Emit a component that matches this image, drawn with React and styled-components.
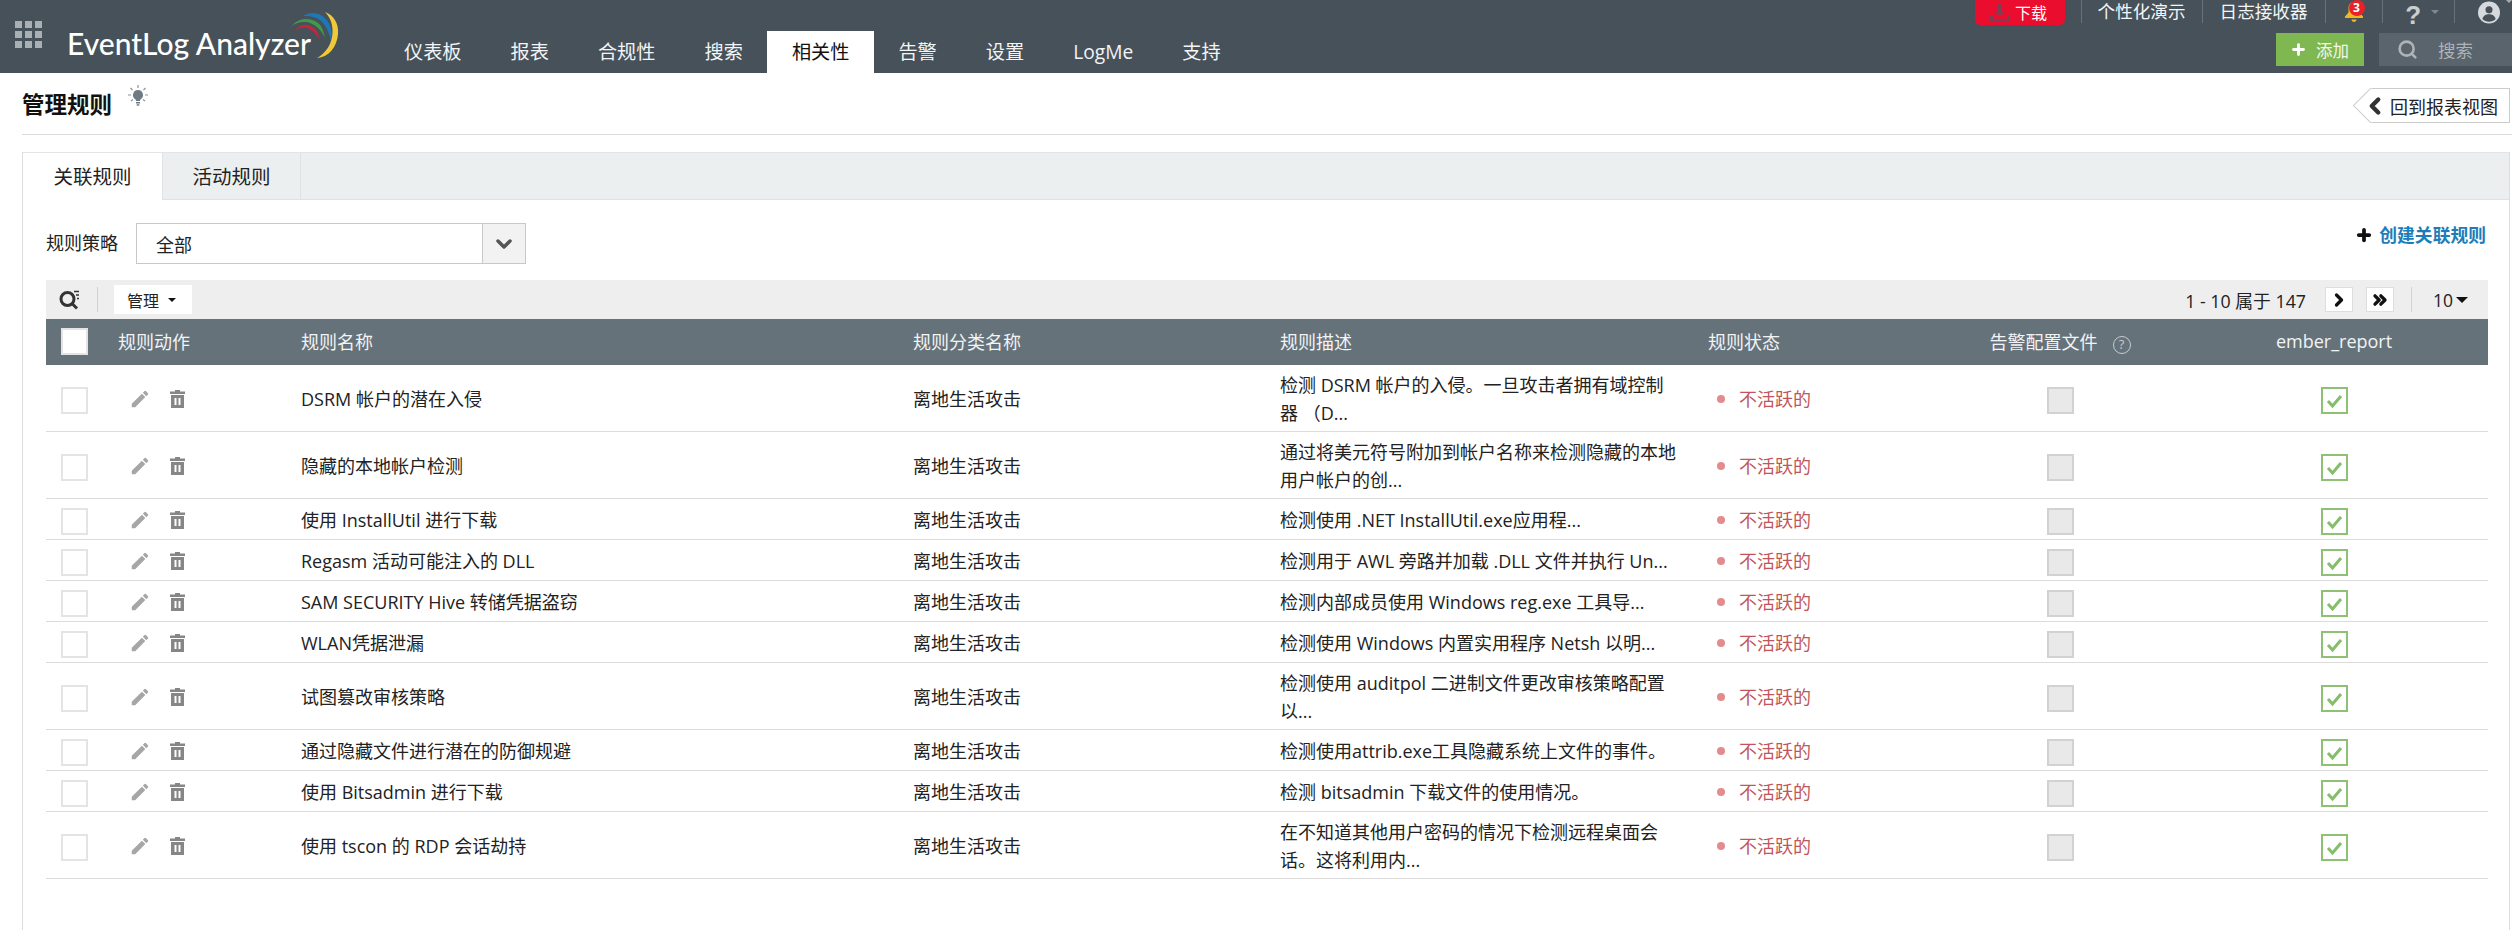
import React from "react";
import styled, { createGlobalStyle } from "styled-components";
import { MdEdit } from "react-icons/md";
import { ChevronLeft, ChevronRight, ChevronsRight, ChevronDown, Search, Plus } from "lucide-react";

const GlobalStyle = createGlobalStyle`
  html, body {
    margin: 0;
    padding: 0;
    background: #fff;
    color: #222;
    font-family: "Open Sans", "Noto Sans CJK SC", sans-serif;
    font-size: 18px;
  }
  * { box-sizing: border-box; }
`;

const Page = styled.div`
  width: 2512px;
  height: 930px;
  overflow: hidden;
  display: flex;
  flex-direction: column;
`;

/* top header */
const Header = styled.header`
  height: 73px;
  flex: none;
  background: #465159;
  display: flex;
  color: #fff;
`;

const Launcher = styled.svg`
  width: 27px;
  height: 27px;
  margin: 21px 0 0 15px;
  flex: none;
`;

const Brand = styled.div`
  position: relative;
  width: 270px;
  margin-left: 25px;
  flex: none;
`;

const BrandName = styled.span`
  display: block;
  margin-top: 24px;
  font-family: Lato, sans-serif;
  font-size: 30px;
  line-height: 38px;
  font-weight: 500;
  white-space: nowrap;
`;

const BrandArcs = styled.svg`
  position: absolute;
  left: 216px;
  top: 8px;
  width: 64px;
  height: 54px;
`;

const Nav = styled.nav`
  display: flex;
  align-items: flex-end;
  margin-left: 42.5px;
`;

const NavItem = styled.a`
  height: 42px;
  padding: 0 24.5px;
  font-size: 19.2px;
  line-height: 42px;
  white-space: nowrap;
  color: ${(p) => (p.$active ? "#111" : "#f2f4f5")};
  background: ${(p) => (p.$active ? "#fff" : "transparent")};
`;

const HeaderRight = styled.div`
  margin-left: auto;
  width: 537px;
  display: flex;
  flex-direction: column;
`;

const UtilityRow = styled.div`
  height: 33px;
  display: flex;
  align-items: flex-start;
`;

const DownloadButton = styled.a`
  width: 90px;
  height: 25px;
  padding-left: 15px;
  display: flex;
  align-items: center;
  gap: 5px;
  background: #ea0d2e;
  border-radius: 0 0 5px 5px;
  font-size: 16px;
  line-height: 24px;
`;

const UtilityLink = styled.a`
  height: 23px;
  padding: 0 ${(p) => p.$pad || 16}px;
  margin-left: ${(p) => p.$offset || 0}px;
  display: flex;
  align-items: center;
  border-left: ${(p) => (p.$first ? "1px solid #66717a" : "0")};
  border-right: 1px solid #66717a;
  font-size: 17.6px;
  line-height: 23px;
  color: #f4f5f6;
  white-space: nowrap;
`;

const IconSlot = styled.div`
  position: relative;
  height: 23px;
  width: ${(p) => p.$w}px;
  padding-left: ${(p) => p.$pad}px;
  display: flex;
  align-items: ${(p) => p.$align || "center"};
  gap: ${(p) => p.$gap || 0}px;
  border-right: ${(p) => (p.$noline ? "0" : "1px solid #66717a")};
`;

const Badge = styled.span`
  position: absolute;
  left: 23px;
  top: 0;
  width: 16px;
  height: 16px;
  border-radius: 50%;
  background: #e8202a;
  color: #fff;
  font-size: 12px;
  font-weight: 700;
  line-height: 16px;
  text-align: center;
`;

const HelpMark = styled.span`
  align-self: flex-start;
  font-family: "Liberation Sans", sans-serif;
  font-size: 26px;
  line-height: normal;
  font-weight: 700;
  color: #c9ced1;
`;

const Caret = styled.span`
  display: inline-block;
  width: 0;
  height: 0;
  border-left: ${(p) => p.$size || 5}px solid transparent;
  border-right: ${(p) => p.$size || 5}px solid transparent;
  border-top: ${(p) => p.$size || 5}px solid ${(p) => p.$color || "#111"};
  margin-left: ${(p) => p.$gap || 0}px;
`;

const ActionRow = styled.div`
  height: 33px;
  display: flex;
  justify-content: flex-end;
  gap: 15px;
`;

const AddButton = styled.a`
  width: 88px;
  padding-left: 14px;
  display: flex;
  align-items: center;
  gap: 9px;
  background: #7fb850;
  font-size: 16.5px;
  color: #f3f8ee;
`;

const HeaderSearch = styled.div`
  width: 133px;
  padding-left: 18px;
  display: flex;
  align-items: center;
  gap: 20px;
  background: #59646c;
  font-size: 17.5px;
  color: #adb3b7;
`;

/* page title */
const TitleRow = styled.div`
  height: 62px;
  flex: none;
  margin-left: 22px;
  display: flex;
  justify-content: space-between;
  align-items: flex-start;
  border-bottom: 1px solid #dcdcdc;
`;

const TitleGroup = styled.div`
  display: flex;
  align-items: flex-start;
  gap: 16px;
`;

const Title = styled.h1`
  margin: 17px 0 0;
  font-size: 22.5px;
  line-height: 30px;
  font-weight: 700;
  color: #111;
`;

const Bulb = styled.svg`
  width: 20px;
  height: 22px;
  margin-top: 12px;
`;

const BackButton = styled.a`
  position: relative;
  width: 140px;
  height: 35px;
  margin: 15px 2px 0 0;
  display: flex;
  align-items: center;
  gap: 2px;
  background: #fff;
  border: 1px solid #ccc;
  border-left: 0;
  font-size: 18px;
  color: #222;
  white-space: nowrap;

  &::before {
    content: "";
    position: absolute;
    left: -12px;
    top: 4px;
    width: 24px;
    height: 24px;
    background: #fff;
    border-left: 1px solid #ccc;
    border-bottom: 1px solid #ccc;
    transform: rotate(45deg);
  }

  & > * {
    position: relative;
    flex: none;
  }

  svg {
    margin-left: -8px;
  }
`;

/* tabbed panel */
const Panel = styled.section`
  flex: 1;
  margin: 17px 2px 0 22px;
  border-left: 1px solid #dddddd;
  border-right: 1px solid #dddddd;
`;

const TabBar = styled.div`
  height: 48px;
  display: flex;
  background: #ecefef;
  border-top: 1px solid #e2e5e5;
  border-bottom: 1px solid #dfe2e2;
`;

const Tab = styled.a`
  width: ${(p) => (p.$active ? "140px" : "138px")};
  height: ${(p) => (p.$active ? "47px" : "46px")};
  text-align: center;
  font-size: 19.5px;
  line-height: 48px;
  color: #222;
  background: ${(p) => (p.$active ? "#fff" : "transparent")};
  border-right: 1px solid #e0e3e3;
`;

const PanelBody = styled.div`
  padding: 23px 21px 0 23px;
`;

const FilterRow = styled.div`
  height: 41px;
  display: flex;
  align-items: flex-start;
`;

const FilterLabel = styled.label`
  width: 90px;
  font-size: 18px;
  line-height: 40px;
`;

const Select = styled.div`
  width: 390px;
  height: 41px;
  display: flex;
  border: 1px solid #c8c8c8;
  font-size: 18px;
  line-height: 42px;
`;

const SelectValue = styled.span`
  flex: 1;
  padding-left: 19px;
`;

const SelectArrow = styled.span`
  width: 43px;
  display: flex;
  align-items: center;
  justify-content: center;
  background: #f2f2f2;
  border-left: 1px solid #c8c8c8;
  color: #555;
`;

const CreateLink = styled.a`
  margin-left: auto;
  margin-right: 2px;
  display: flex;
  align-items: center;
  gap: 6px;
  font-size: 17.8px;
  line-height: 24px;
  font-weight: 700;
  color: #1d7db8;
`;

const Toolbar = styled.div`
  height: 39px;
  margin-top: 16px;
  padding: 0 20px 0 13px;
  display: flex;
  align-items: center;
  background: #eeeeee;
`;

const ToolbarSep = styled.span`
  width: 1px;
  height: 25px;
  margin: 0 ${(p) => p.$right}px 0 ${(p) => p.$left}px;
  background: #d2d2d2;
`;

const ManageButton = styled.a`
  width: 78px;
  height: 29px;
  padding-left: 13px;
  display: flex;
  align-items: center;
  background: #fff;
  font-size: 16px;
`;

const Paging = styled.div`
  margin-left: auto;
  display: flex;
  align-items: center;
`;

const PageCount = styled.span`
  font-size: 17.8px;
  margin-right: 19px;
  white-space: nowrap;
`;

const PageButton = styled.a`
  width: 28px;
  height: 25px;
  margin-right: ${(p) => p.$gap || 0}px;
  display: flex;
  align-items: center;
  justify-content: center;
  background: #fff;
  border: 1px solid #dedede;
  color: #111;
`;

const PageSize = styled.span`
  font-size: 17.5px;
`;

/* rules table */
const Table = styled.table`
  width: 2442px;
  table-layout: fixed;
  border-collapse: collapse;
`;

const Col = styled.col`
  width: ${(p) => p.$w}px;
`;

const HeadRow = styled.tr`
  height: 46px;
  background: #66727a;
`;

const Th = styled.th`
  padding: 0 0 2px ${(p) => (p.$center ? 0 : p.$pad || 16)}px;
  text-align: ${(p) => (p.$center ? "center" : "left")};
  font-size: 18px;
  font-weight: 400;
  color: #f1f3f4;
`;

const Row = styled.tr`
  height: 41px;
  border-bottom: 1px solid #dcdcdc;
`;

const Td = styled.td`
  padding: 6px ${(p) => p.$right || 0}px 4px ${(p) => (p.$center ? 0 : p.$pad || 16)}px;
  text-align: ${(p) => (p.$center ? "center" : "left")};
  vertical-align: middle;
  font-size: 18px;
  line-height: 28px;
  color: #222;
`;

const Check = styled.span`
  display: inline-block;
  width: 27px;
  height: 27px;
  vertical-align: middle;
  background: ${(p) => (p.$disabled ? "#e9e9e9" : "#fff")};
  border: 2px solid
    ${(p) => (p.$disabled ? "#d2d2d2" : p.$checked ? "#8fc174" : "#e4e4e4")};
`;

const RowActions = styled.div`
  display: flex;
  align-items: center;
  gap: 19px;
  color: #a6a6a6;
`;

const Status = styled.span`
  display: flex;
  align-items: center;
  gap: 14px;
  padding-left: 9px;
  color: #c2555a;
`;

const StatusDot = styled.span`
  width: 8px;
  height: 8px;
  border-radius: 50%;
  background: #e58a8d;
`;

const HelpCircle = styled.span`
  display: inline-block;
  width: 18px;
  height: 18px;
  margin-left: 15px;
  vertical-align: 0;
  border: 1.5px solid #c6cbce;
  border-radius: 50%;
  font-size: 13px;
  line-height: 15px;
  text-align: center;
  color: #c6cbce;
`;

const rules = [
  ["DSRM 帐户的潜在入侵", "检测 DSRM 帐户的入侵。一旦攻击者拥有域控制器 （D..."],
  ["隐藏的本地帐户检测", "通过将美元符号附加到帐户名称来检测隐藏的本地用户帐户的创..."],
  ["使用 InstallUtil 进行下载", "检测使用 .NET InstallUtil.exe应用程..."],
  ["Regasm 活动可能注入的 DLL", "检测用于 AWL 旁路并加载 .DLL 文件并执行 Un..."],
  ["SAM SECURITY Hive 转储凭据盗窃", "检测内部成员使用 Windows reg.exe 工具导..."],
  ["WLAN凭据泄漏", "检测使用 Windows 内置实用程序 Netsh 以明..."],
  ["试图篡改审核策略", "检测使用 auditpol 二进制文件更改审核策略配置以..."],
  ["通过隐藏文件进行潜在的防御规避", "检测使用attrib.exe工具隐藏系统上文件的事件。"],
  ["使用 Bitsadmin 进行下载", "检测 bitsadmin 下载文件的使用情况。"],
  ["使用 tscon 的 RDP 会话劫持", "在不知道其他用户密码的情况下检测远程桌面会话。这将利用内..."],
];

const navItems = ["仪表板", "报表", "合规性", "搜索", "相关性", "告警", "设置", "LogMe", "支持"];

const LauncherIcon = () => (
  <Launcher viewBox="0 0 27 27" fill="#a9b0b4">
    {[0, 10, 20].map((y) =>
      [0, 10, 20].map((x) => <rect key={`${x}-${y}`} x={x} y={y} width="7" height="7" />)
    )}
  </Launcher>
);

const LogoArcs = () => (
  <BrandArcs viewBox="0 0 64 54">
    <path d="M8 19 C15 9 27 9 35 15 C39 18 41 24 42 30 C38 21 31 15 23 14 C17 13.5 12 15 8 19Z" fill="#3f9a4a" />
    <path d="M11 23 C17 15 27 15 32 21 C35 24 36 27 36 31 C32 24 27 20 22 19.5 C18 19.5 14 20.5 11 23Z" fill="#c2273c" />
    <path d="M20 8 C27 3 37 4 43 11 C48 17 50 25 48 33 C46 24 43 17 37 12 C32 8.500 26 7.500 20 8Z" fill="#1f77b4" />
    <path d="M42 4 C51 7 56 16 55 26 C54 39 46 49 34 50 C43 45 49 36 49.500 25 C50 16 47 9 42 4Z" fill="#f0c93a" />
  </BrandArcs>
);

const DownloadIcon = () => (
  <svg width="20" height="20" viewBox="0 0 20 20" fill="#7d3f55">
    <path d="M8 1h4v7h3.500L10 13.500 4.500 8H8z" />
    <path d="M0 13h3v4h14v-4h3v6H0z" />
  </svg>
);

const BellIcon = () => (
  <svg width="20" height="23" viewBox="0 0 20 23" fill="#f2b61e">
    <path d="M10 2c-3.500 0-5.500 2.700-5.500 6v4.500L1 16.500V18h18v-1.500l-3.500-4V8c0-3.300-2-6-5.500-6z" />
    <path d="M7.500 19.500h5c0 1.500-1.100 2.500-2.500 2.500s-2.500-1-2.500-2.500z" />
  </svg>
);

const AvatarIcon = () => (
  <svg width="25" height="25" viewBox="0 0 25 25">
    <circle cx="12.500" cy="12.500" r="12.500" fill="#d6dadc" />
    <circle cx="12.500" cy="9.500" r="4" fill="#465159" />
    <path d="M5 20c1-4 4-5.500 7.500-5.500S19 16 20 20c-2 2-4.500 3-7.500 3S7 22 5 20z" fill="#465159" />
  </svg>
);

const BulbIcon = () => (
  <Bulb viewBox="0 0 20 22" fill="#6f7b83">
    <path d="M10 5a5 5 0 0 0-3 9c.8.700 1 1.300 1 2h4c0-.7.200-1.300 1-2a5 5 0 0 0-3-9z" />
    <rect x="8" y="17" width="4" height="1.500" />
    <rect x="8.700" y="19.200" width="2.600" height="1.500" />
    <path d="M10 0v3M2.500 3l2 2M17.500 3l-2 2M0 10h3M17 10h3M3 16l2-1.500M17 16l-2-1.500" stroke="#8a949a" strokeWidth="1.200" fill="none" />
  </Bulb>
);

const TableSearchIcon = () => (
  <svg width="21" height="21" viewBox="0 0 21 21" fill="none" stroke="#333" strokeWidth="3">
    <circle cx="8.500" cy="10" r="6.500" />
    <path d="M13 14.500l5 5" />
    <path d="M15 2.500h5M17 6h3M18 9.500h2" strokeWidth="1.500" />
  </svg>
);

const TrashIcon = () => (
  <svg width="15" height="18" viewBox="0 0 15 18" fill="#868686">
    <path d="M5 0h5v1.500h5V4H0V1.500h5z" />
    <path d="M1 5h13v13H1zM4.500 8v7h2V8zM8.500 8v7h2V8z" fillRule="evenodd" />
  </svg>
);

const CheckMark = styled.svg`
  display: block;
  width: 23px;
  height: 23px;
`;

const GreenCheck = () => (
  <Check $checked>
    <CheckMark viewBox="0 0 23 23" fill="none" stroke="#86bd68" strokeWidth="3">
      <path d="M5 12l4.500 5L18 7" />
    </CheckMark>
  </Check>
);

const App = () => {
  return (
    <Page>
      <GlobalStyle />
      <Header>
        <LauncherIcon />
        <Brand>
          <BrandName>EventLog Analyzer</BrandName>
          <LogoArcs />
        </Brand>
        <Nav>
          {navItems.map((item) => (
            <NavItem key={item} $active={item === "相关性"}>
              {item}
            </NavItem>
          ))}
        </Nav>
        <HeaderRight>
          <UtilityRow>
            <DownloadButton>
              <DownloadIcon />
              下载
            </DownloadButton>
            <UtilityLink $first $offset={16}>个性化演示</UtilityLink>
            <UtilityLink $pad={17}>日志接收器</UtilityLink>
            <IconSlot $w={58} $pad={18}>
              <BellIcon />
              <Badge>3</Badge>
            </IconSlot>
            <IconSlot $w={72} $pad={22} $gap={10}>
              <HelpMark>?</HelpMark>
              <Caret $size={4} $color="#7d878e" />
            </IconSlot>
            <IconSlot $w={57} $pad={23} $gap={6} $noline $align="flex-start">
              <AvatarIcon />
              <Caret $size={3} $color="#a4acb1" $gap={0} />
            </IconSlot>
          </UtilityRow>
          <ActionRow>
            <AddButton>
              <Plus size={17} strokeWidth={4} color="#fff" />
              添加
            </AddButton>
            <HeaderSearch>
              <Search size={21} strokeWidth={3} color="#adb3b7" />
              搜索
            </HeaderSearch>
          </ActionRow>
        </HeaderRight>
      </Header>

      <TitleRow>
        <TitleGroup>
          <Title>管理规则</Title>
          <BulbIcon />
        </TitleGroup>
        <BackButton>
          <ChevronLeft size={26} strokeWidth={4} color="#333" />
          <span>回到报表视图</span>
        </BackButton>
      </TitleRow>

      <Panel>
        <TabBar>
          <Tab $active>关联规则</Tab>
          <Tab>活动规则</Tab>
        </TabBar>
        <PanelBody>
          <FilterRow>
            <FilterLabel>规则策略</FilterLabel>
            <Select>
              <SelectValue>全部</SelectValue>
              <SelectArrow>
                <ChevronDown size={24} strokeWidth={3.5} />
              </SelectArrow>
            </Select>
            <CreateLink>
              <Plus size={18} strokeWidth={5} color="#111" />
              创建关联规则
            </CreateLink>
          </FilterRow>

          <Toolbar>
            <TableSearchIcon />
            <ToolbarSep $left={17} $right={16} />
            <ManageButton>
              管理
              <Caret $size={4} $gap={9} />
            </ManageButton>
            <Paging>
              <PageCount>1 - 10 属于 147</PageCount>
              <PageButton $gap={13}>
                <ChevronRight size={20} strokeWidth={4} />
              </PageButton>
              <PageButton>
                <ChevronsRight size={20} strokeWidth={4} />
              </PageButton>
              <ToolbarSep $left={17} $right={21} />
              <PageSize>10</PageSize>
              <Caret $size={6} $gap={3} />
            </Paging>
          </Toolbar>

          <Table>
            <colgroup>
              <Col $w={56} />
              <Col $w={183} />
              <Col $w={612} />
              <Col $w={367} />
              <Col $w={428} />
              <Col $w={248} />
              <Col $w={240} />
              <Col $w={308} />
            </colgroup>
            <thead>
              <HeadRow>
                <Th $pad={15}><Check /></Th>
                <Th>规则动作</Th>
                <Th>规则名称</Th>
                <Th>规则分类名称</Th>
                <Th>规则描述</Th>
                <Th>规则状态</Th>
                <Th $center>
                  告警配置文件
                  <HelpCircle>?</HelpCircle>
                </Th>
                <Th $center>ember_report</Th>
              </HeadRow>
            </thead>
            <tbody>
              {rules.map(([name, desc]) => (
                <Row key={name}>
                  <Td $pad={15}><Check /></Td>
                  <Td $pad={27}>
                    <RowActions>
                      <MdEdit size={22} />
                      <TrashIcon />
                    </RowActions>
                  </Td>
                  <Td>{name}</Td>
                  <Td>离地生活攻击</Td>
                  <Td $right={14}>{desc}</Td>
                  <Td>
                    <Status>
                      <StatusDot />
                      不活跃的
                    </Status>
                  </Td>
                  <Td $center><Check $disabled /></Td>
                  <Td $center><GreenCheck /></Td>
                </Row>
              ))}
            </tbody>
          </Table>
        </PanelBody>
      </Panel>
    </Page>
  );
};

export default App;
